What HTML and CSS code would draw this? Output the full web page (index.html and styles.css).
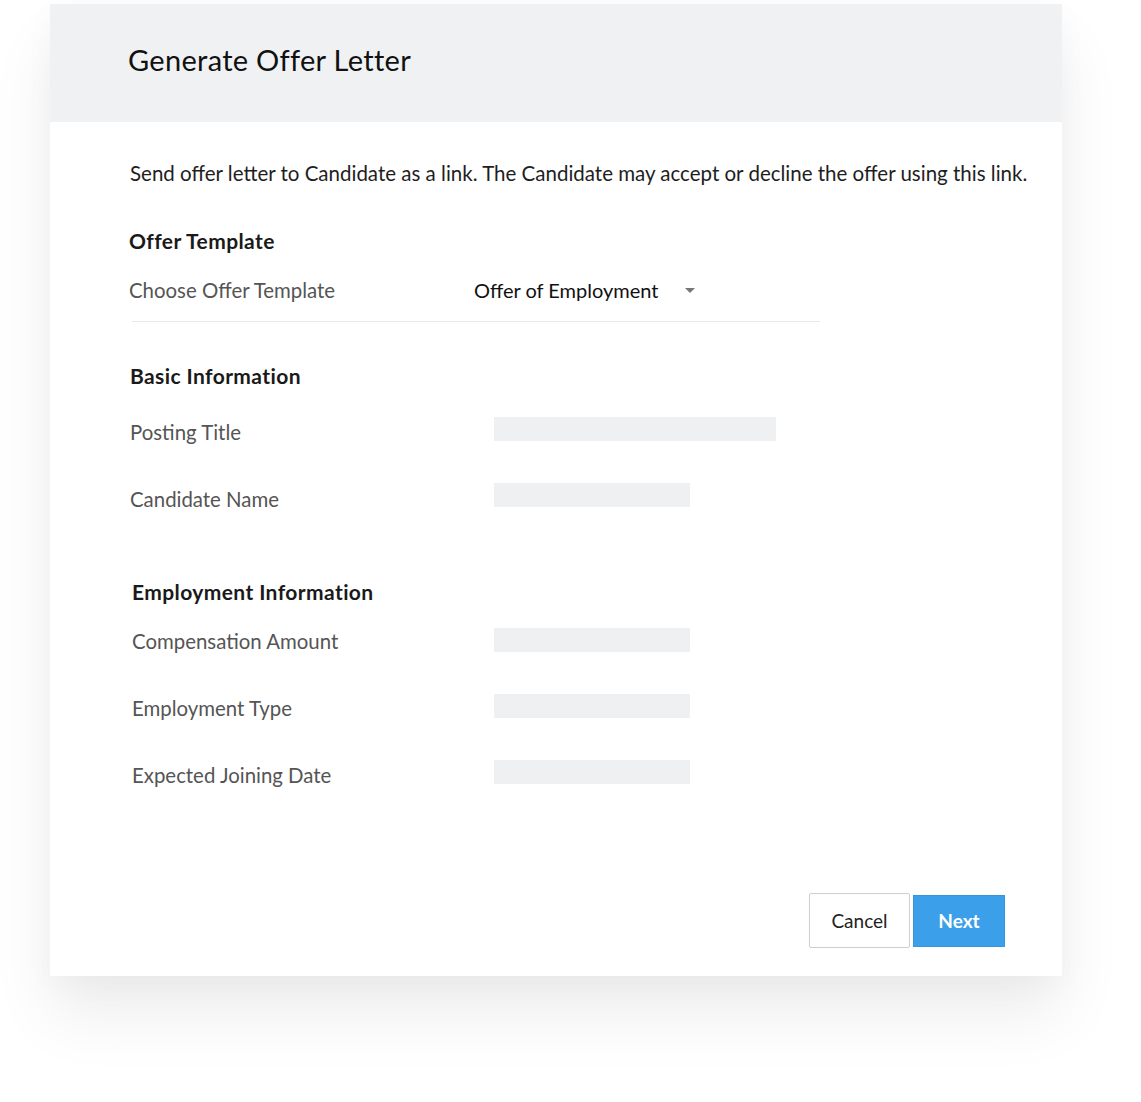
FILE: index.html
```html
<!DOCTYPE html>
<html>
<head>
<meta charset="utf-8">
<link rel="stylesheet" href="styles.css">
</head>
<body>
<div class="card">
  <div class="header"><h1 class="title">Generate Offer Letter</h1></div>
  <div class="content">
    <p class="desc">Send offer letter to Candidate as a link. The Candidate may accept or decline the offer using this link.</p>
    <h2 class="section s-offer">Offer Template</h2>
    <div class="choose-row">
      <span class="label">Choose Offer Template</span>
      <span class="select">Offer of Employment<span class="caret"></span></span>
    </div>
    <div class="divider"></div>
    <h2 class="section s-basic">Basic Information</h2>
    <div class="row r-posting"><span class="label lbl">Posting Title</span><span class="box wide"></span></div>
    <div class="row r-gap r-cand"><span class="label lbl">Candidate Name</span><span class="box"></span></div>
    <h2 class="section s-emp">Employment Information</h2>
    <div class="row r-comp"><span class="label lbl">Compensation Amount</span><span class="box"></span></div>
    <div class="row r-gap r-type"><span class="label lbl">Employment Type</span><span class="box"></span></div>
    <div class="row r-gap r-date"><span class="label lbl">Expected Joining Date</span><span class="box"></span></div>
    <div class="actions">
      <button class="btn cancel">Cancel</button>
      <button class="btn next">Next</button>
    </div>
  </div>
</div>
</body>
</html>
```
FILE: styles.css
```css
html, body {
  margin: 0;
  padding: 0;
  background: #ffffff;
}
body {
  font-family: Lato, "Open Sans", sans-serif;
  color: #222;
  padding: 4px 0 140px 50px;
}
.card {
  width: 1012px;
  height: 972px;
  background: #fff;
  box-shadow: 0 40px 60px rgba(0, 0, 0, 0.07), 0 8px 30px rgba(0, 0, 0, 0.03);
  display: flex;
  flex-direction: column;
}
.header {
  height: 118px;
  background: #f0f1f3;
  display: flex;
  align-items: center;
  padding-left: 78px;
  padding-bottom: 6px;
  box-sizing: border-box;
}
.title {
  margin: 0;
  font-size: 29px;
  font-weight: 400;
  color: #111;
  line-height: 34px;
  letter-spacing: 0.3px;
}
.content {
  flex: 1;
  padding: 39px 57px 28px 80px;
  display: flex;
  flex-direction: column;
}
.desc {
  margin: 0;
  font-size: 20.5px;
  line-height: 24px;
  color: #1e1e1e;
  white-space: nowrap;
}
.section {
  margin: 0;
  font-size: 21px;
  font-weight: 700;
  line-height: 24px;
  color: #1a1a1a;
  letter-spacing: 0.4px;
}
.s-offer { margin-top: 44px; margin-left: -1px; }
.s-basic { margin-top: 42px; }
.s-emp { margin-top: 73px; margin-left: 2px; }
.label {
  font-size: 20.4px;
  color: #555;
  line-height: 24px;
}
.choose-row {
  display: flex;
  margin-top: 25px;
  margin-left: -1px;
  height: 24px;
}
.choose-row .label {
  width: 345px;
}
.select {
  display: flex;
  align-items: center;
  font-size: 20px;
  line-height: 24px;
  color: #111;
}
.caret {
  width: 0;
  height: 0;
  border-left: 5px solid transparent;
  border-right: 5px solid transparent;
  border-top: 5px solid #777;
  margin-left: 26px;
  margin-top: 0;
}
.divider {
  height: 1px;
  width: 688px;
  background: #e9e9e9;
  margin: 19px 0 0 2px;
}
.row {
  display: flex;
  align-items: flex-start;
  height: 24px;
}
.row .lbl {
  width: 364px;
  line-height: 30px;
  flex: none;
}
.r-posting { margin-top: 29px; }
.r-gap { margin-top: 42px; }
.r-cand .lbl { line-height: 32px; }
.r-comp { margin-top: 24px; margin-left: 2px; }
.r-comp .lbl { line-height: 26px; }
.r-type .lbl { line-height: 28px; }
.r-comp .lbl, .r-type .lbl, .r-date .lbl { width: 362px; }
.r-type, .r-date { margin-left: 2px; }
.box {
  display: block;
  width: 196px;
  height: 24px;
  background: #eff0f2;
}
.box.wide { width: 282px; }
.actions {
  margin-top: auto;
  display: flex;
  justify-content: flex-end;
  align-items: center;
}
.btn {
  font-family: Lato, "Open Sans", sans-serif;
  font-size: 19px;
  margin: 0;
  cursor: pointer;
}
.cancel {
  width: 101px;
  height: 55px;
  background: #fff;
  border: 1px solid #cfcfcf;
  border-radius: 2px;
  color: #222;
}
.next {
  width: 92px;
  height: 52px;
  margin-left: 3px;
  background: #3ba0e9;
  border: 1px solid #3596dd;
  color: #fff;
  font-weight: 700;
}
```
